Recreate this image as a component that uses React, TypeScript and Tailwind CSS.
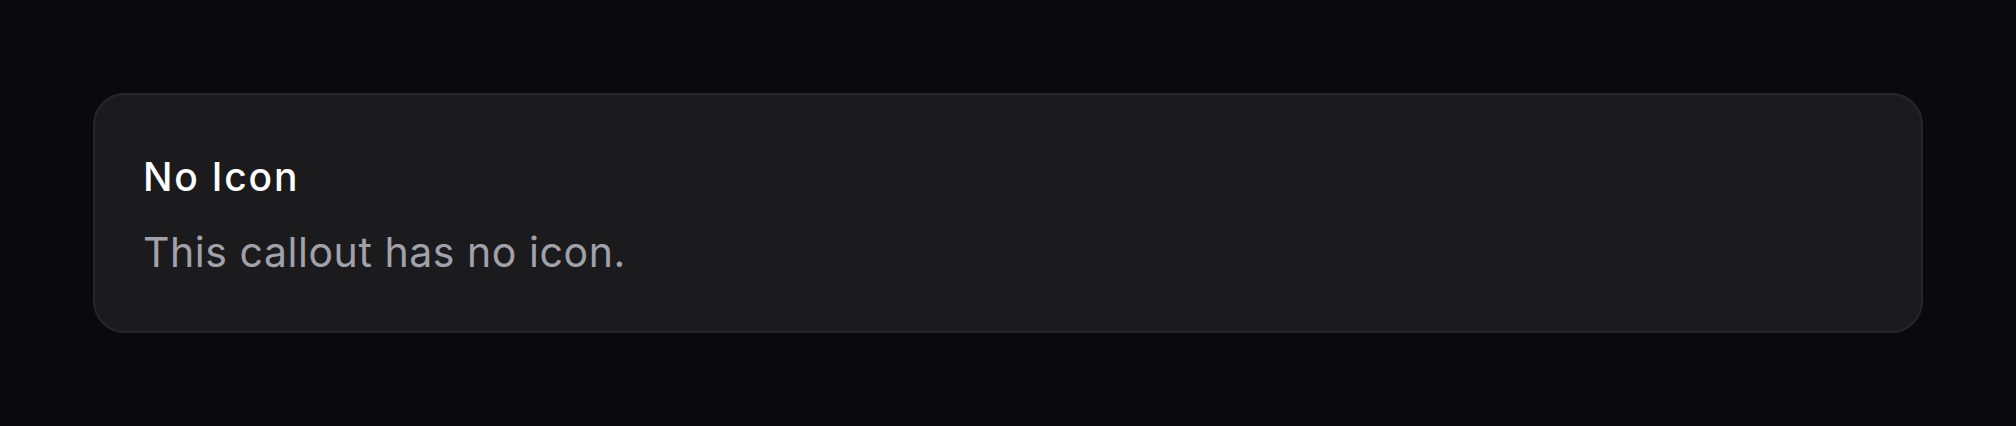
import React from 'react';

const App: React.FC = () => {
  return (
    <div className="min-h-screen bg-[#0a0a0c] px-[93px] py-[93px]" style={{ fontFamily: 'Inter, "Noto Sans", sans-serif' }}>
      {/* Callout */}
      <div className="rounded-[32px] border-2 border-[#27272b] bg-[#1b1b1e] px-12 pt-[62px] pb-[49px]">
        <h3 className="text-[39px] leading-[40px] font-medium tracking-[1.8px] text-white">No Icon</h3>
        <p className="mt-[25px] text-[41px] leading-[60px] tracking-[0.55px] text-[#a1a1aa]">This callout has no icon.</p>
      </div>
    </div>
  );
};

export default App;
